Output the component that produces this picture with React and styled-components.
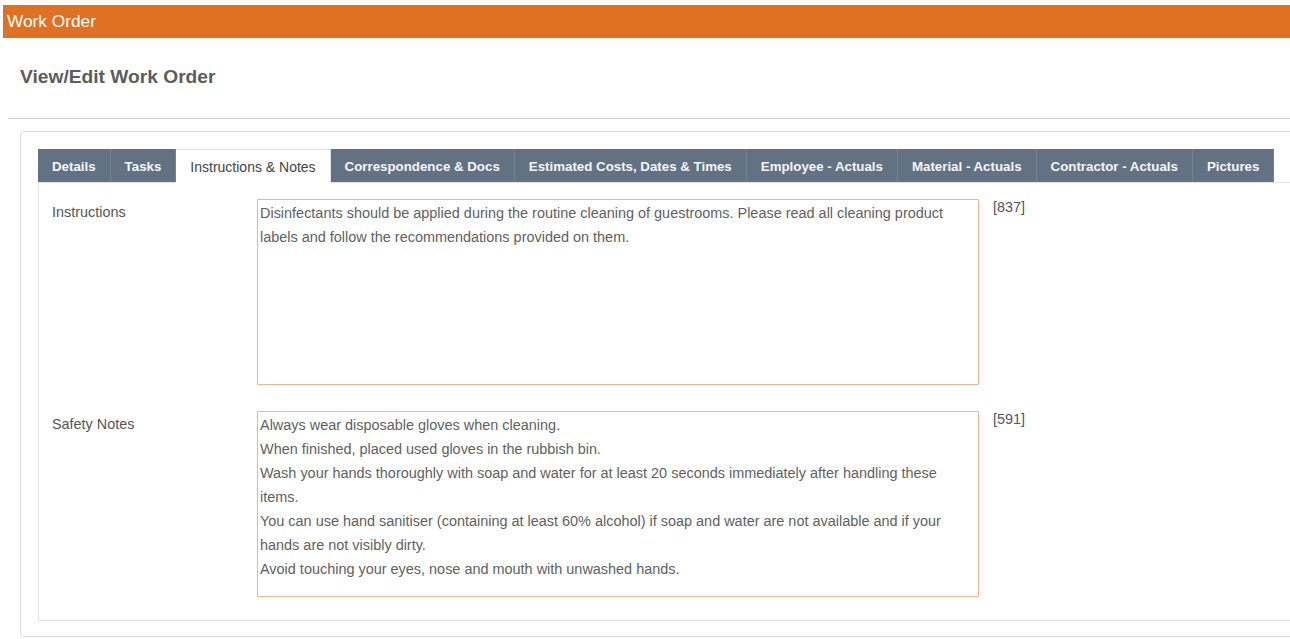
import styled, { createGlobalStyle } from 'styled-components';

const GlobalStyle = createGlobalStyle`
  html, body {
    margin: 0;
    padding: 0;
    background: #fff;
    overflow: hidden;
  }
  body {
    font-family: "Liberation Sans", Arial, sans-serif;
    color: #555;
  }
`;

const Page = styled.div`
  width: 1290px;
  padding-top: 5px;
`;

const TopBar = styled.div`
  margin-left: 3px;
  height: 33px;
  display: flex;
  align-items: center;
  padding-left: 4px;
  background: #e07022;
  color: #fff;
  font-size: 17.3px;
`;

const PageTitle = styled.h2`
  margin: 0;
  padding: 28px 0 0 20px;
  height: 52px;
  font-size: 19.2px;
  font-weight: bold;
  color: #5c5c5c;
  line-height: 22px;
`;

const Divider = styled.div`
  margin: 0 0 0 8px;
  border-top: 1px solid #cfcfcf;
`;

const Frame = styled.div`
  margin: 12px -20px 0 20px;
  padding: 17px 0 15px 17px;
  border: 1px solid #dcdcdc;
  border-radius: 4px;
`;

const TabBar = styled.div`
  display: flex;
  border-bottom: 1px solid #e3e3e3;
`;

const Tab = styled.div`
  display: flex;
  align-items: center;
  padding: 0 14px;
  white-space: nowrap;
  font-size: ${p => (p.$active ? '14px' : '13.3px')};
  background: ${p => (p.$active ? '#fff' : '#627282')};
  color: ${p => (p.$active ? '#444' : '#f4f6f8')};
  font-weight: ${p => (p.$active ? 'normal' : 'bold')};
  border-right: 1px solid ${p => (p.$active ? '#e3e3e3' : '#74838f')};
  border-top: 1px solid ${p => (p.$active ? '#e3e3e3' : '#627282')};
  margin-bottom: ${p => (p.$active ? '-1px' : '0')};
  height: ${p => (p.$active ? '33px' : '32px')};
`;

const Panel = styled.div`
  border-left: 1px solid #e3e3e3;
  border-bottom: 1px solid #e3e3e3;
  padding: 16px 0 23px 13px;
  display: flex;
  flex-direction: column;
  gap: 26px;
`;

const FieldRow = styled.div`
  display: grid;
  grid-template-columns: 191px 722px auto;
  column-gap: 14px;
  align-items: start;
`;

const Label = styled.div`
  font-size: 14.4px;
  line-height: 24px;
  padding-top: 1px;
  color: #555;
`;

const NoteBox = styled.div`
  height: 180px;
  border: 1px solid #f6b290;
  box-shadow: 0 0 1px #fbd0ba;
  border-radius: 1px;
  padding: 1px 7px 3px 2px;
  font-size: 14.45px;
  line-height: 24px;
  color: #5f5f5f;
  overflow: hidden;
`;

const Line = styled.div``;

const Counter = styled.div`
  font-size: 14.4px;
  line-height: 16px;
  color: #555;
`;

const tabs = [
  'Details',
  'Tasks',
  'Instructions & Notes',
  'Correspondence & Docs',
  'Estimated Costs, Dates & Times',
  'Employee - Actuals',
  'Material - Actuals',
  'Contractor - Actuals',
  'Pictures',
];

const fields = [
  {
    label: 'Instructions',
    count: 837,
    lines: [
      'Disinfectants should be applied during the routine cleaning of guestrooms. Please read all cleaning product labels and follow the recommendations provided on them.',
    ],
  },
  {
    label: 'Safety Notes',
    count: 591,
    lines: [
      'Always wear disposable gloves when cleaning.',
      'When finished, placed used gloves in the rubbish bin.',
      'Wash your hands thoroughly with soap and water for at least 20 seconds immediately after handling these items.',
      'You can use hand sanitiser (containing at least 60% alcohol) if soap and water are not available and if your hands are not visibly dirty.',
      'Avoid touching your eyes, nose and mouth with unwashed hands.',
    ],
  },
];

const App = () => {
  return (
    <Page>
      <GlobalStyle />
      <TopBar>Work Order</TopBar>
      <PageTitle>View/Edit Work Order</PageTitle>
      <Divider />
      <Frame>
        <TabBar>
          {tabs.map(t => (
            <Tab key={t} $active={t === 'Instructions & Notes'}>
              {t}
            </Tab>
          ))}
        </TabBar>
        <Panel>
          {fields.map(f => (
            <FieldRow key={f.label}>
              <Label>{f.label}</Label>
              <NoteBox>
                {f.lines.map((l, i) => (
                  <Line key={i}>{l}</Line>
                ))}
              </NoteBox>
              <Counter>[{f.count}]</Counter>
            </FieldRow>
          ))}
        </Panel>
      </Frame>
    </Page>
  );
};

export default App;
